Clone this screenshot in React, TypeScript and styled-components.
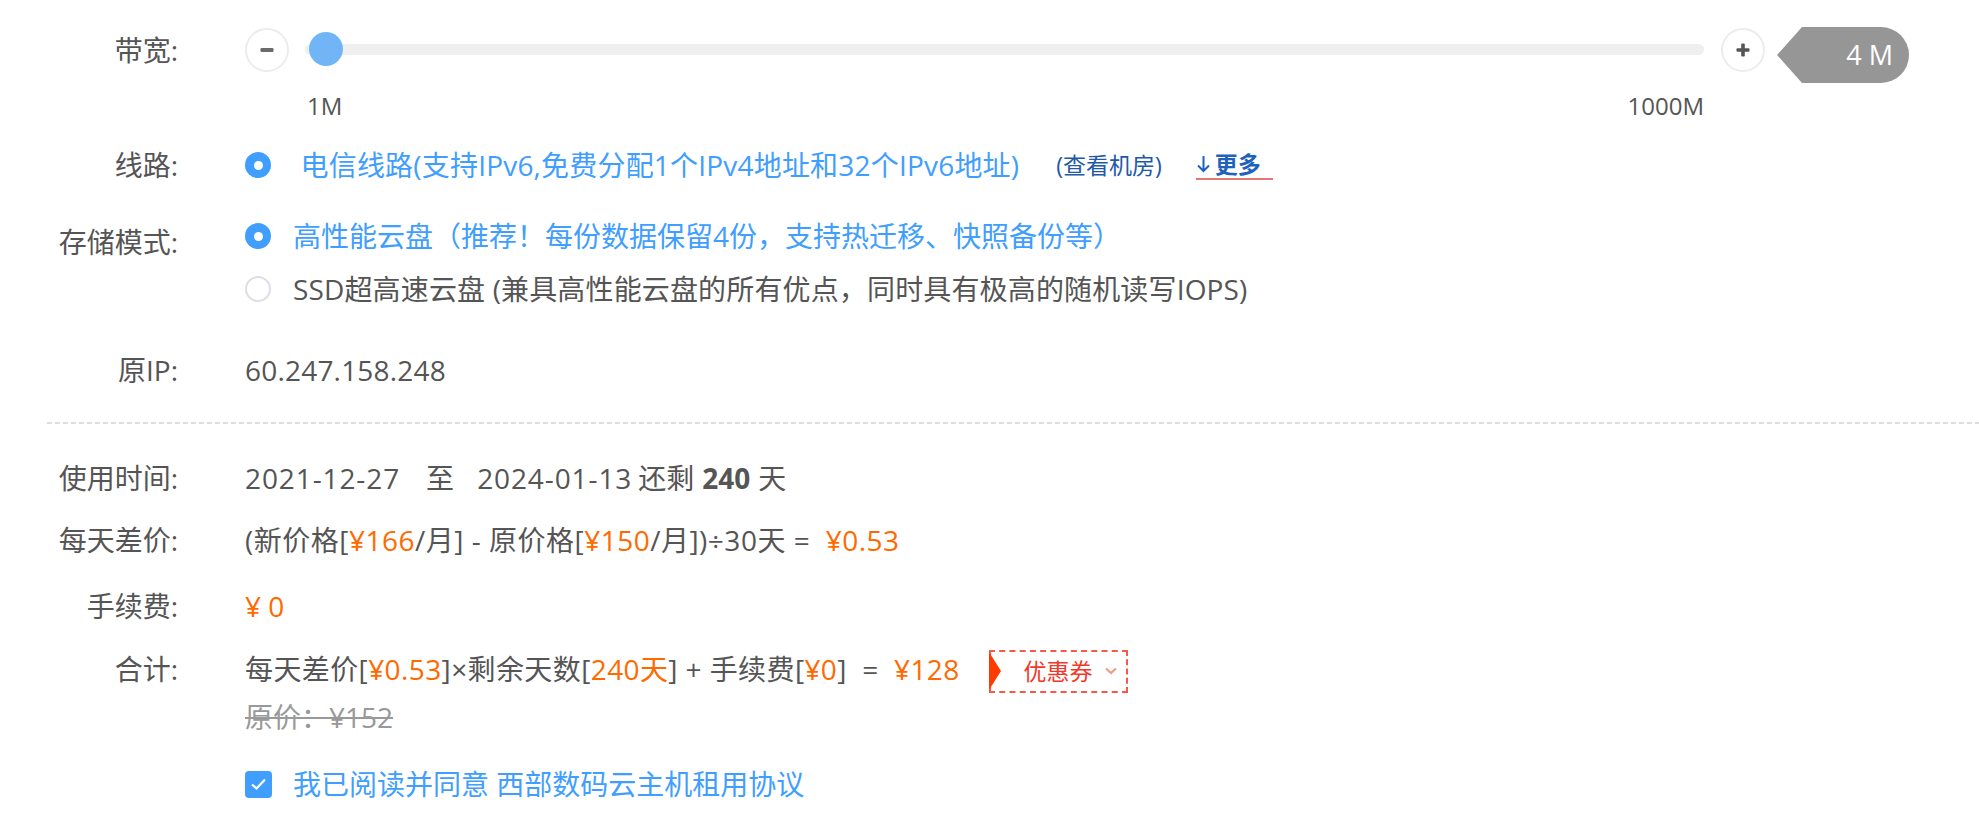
import React from 'react';
import styled, { createGlobalStyle } from 'styled-components';

const GlobalStyle = createGlobalStyle`
  html, body { margin: 0; padding: 0; background: #fff; }
  body {
    font-family: "Open Sans", "Noto Sans CJK SC", sans-serif;
    font-size: 28px;
    color: #555;
  }
  * { box-sizing: border-box; }
`;

const Page = styled.div`
  padding: 28px 70px 40px 47px;
`;

const Row = styled.div<{ $mt?: number; $align?: string }>`
  display: flex;
  align-items: ${p => p.$align ?? 'flex-start'};
  margin-top: ${p => p.$mt ?? 0}px;
`;

const Label = styled.div<{ $pt?: number }>`
  flex: none;
  width: 131px;
  margin-right: 67px;
  padding-top: ${p => p.$pt ?? 0}px;
  text-align: right;
  line-height: 40px;
  color: #555;
  white-space: nowrap;
`;

const Content = styled.div<{ $ls?: number }>`
  flex: 1;
  min-width: 0;
  line-height: 40px;
  white-space: nowrap;
  color: #555;
  letter-spacing: ${p => p.$ls ?? 0}px;
`;

/* ---------- slider ---------- */
const SliderBox = styled.div`
  flex: 1;
  display: flex;
  align-items: center;
  height: 44px;
`;

const StepButton = styled.button`
  flex: none;
  width: 44px;
  height: 44px;
  border-radius: 50%;
  border: 2px solid #ececec;
  background: #fff;
  display: flex;
  align-items: center;
  justify-content: center;
  padding: 0;
  cursor: pointer;
`;

const Track = styled.div`
  flex: 1;
  position: relative;
  height: 11px;
  border-radius: 6px;
  background: #efefef;
  margin: -2px 17px 0 16px;
`;

const Thumb = styled.div`
  position: absolute;
  top: 50%;
  width: 34px;
  height: 34px;
  margin-top: -17px;
  border-radius: 50%;
  background: #72b5f6;
`;

const ValueTag = styled.div`
  flex: none;
  position: relative;
  width: 107px;
  height: 56px;
  margin: 10px 0 0 37px;
  background: #969696;
  color: #fff;
  border-radius: 0 28px 28px 0;
  font-size: 27px;
  line-height: 56px;
  text-align: right;
  padding-right: 16px;
  &::before {
    content: '';
    position: absolute;
    left: -25px;
    top: 0;
    border-right: 25px solid #969696;
    border-top: 28px solid transparent;
    border-bottom: 28px solid transparent;
  }
`;

const ScaleBar = styled.div`
  flex: 1;
  display: flex;
  justify-content: space-between;
  margin: 0 205px 0 60px;
  padding-left: 2px;
  font-size: 24px;
  line-height: 28px;
  color: #555;
`;

/* ---------- radios ---------- */
const Options = styled.div`
  display: flex;
  flex-direction: column;
  gap: 13px;
`;

const Option = styled.div`
  display: flex;
  align-items: center;
  line-height: 40px;
  white-space: nowrap;
`;

const Radio = styled.span<{ $checked?: boolean }>`
  flex: none;
  position: relative;
  width: 26px;
  height: 26px;
  margin-right: 22px;
  border-radius: 50%;
  background: ${p => (p.$checked ? '#409eff' : '#fff')};
  border: ${p => (p.$checked ? 'none' : '2px solid #dcdfe6')};
  &::after {
    content: '';
    display: ${p => (p.$checked ? 'block' : 'none')};
    position: absolute;
    left: 50%;
    top: 50%;
    width: 9px;
    height: 9px;
    margin: -4.5px 0 0 -4.5px;
    border-radius: 50%;
    background: #fff;
  }
`;

const OptionText = styled.span<{ $active?: boolean; $ls?: number }>`
  color: ${p => (p.$active ? '#409eff' : '#555')};
  letter-spacing: ${p => p.$ls ?? 0}px;
`;

const SmallLink = styled.span`
  margin-left: 37px;
  font-size: 23px;
  color: #2159a8;
`;

const MoreLink = styled.span`
  display: inline-flex;
  align-items: center;
  gap: 4px;
  margin-left: 34px;
  padding-right: 12px;
  font-size: 23px;
  font-weight: 700;
  line-height: 28px;
  color: #1f62bd;
  border-bottom: 2px solid #e07878;
`;

/* ---------- misc ---------- */
const Divider = styled.div`
  height: 2px;
  margin: 32px -70px 0 0;
  background: repeating-linear-gradient(to right, #dddddd 0 5px, transparent 5px 8px);
`;

const Space = styled.span<{ $w: number }>`
  display: inline-block;
  width: ${p => p.$w}px;
`;

const DateText = styled.span`
  letter-spacing: 0.9px;
`;

const Strong = styled.b`
  font-weight: 700;
  color: #555;
`;

const Price = styled.span`
  color: #ff6a00;
`;

const TotalLine = styled.div`
  display: flex;
  align-items: center;
  height: 40px;
  white-space: nowrap;
`;

const TotalText = styled.span`
  letter-spacing: 0.4px;
`;

const Coupon = styled.div`
  flex: none;
  position: relative;
  display: flex;
  align-items: center;
  width: 139px;
  height: 43px;
  margin: 4px 0 0 29px;
  padding: 0 8px 0 33px;
  border: 2px dashed #f45a4a;
  font-size: 23px;
  color: #f0392b;
  &::before {
    content: '';
    position: absolute;
    left: -2px;
    top: 0;
    border-left: 12px solid #ff3a00;
    border-top: 19.5px solid transparent;
    border-bottom: 19.5px solid transparent;
  }
`;

const CouponText = styled.span`
  flex: 1;
`;

const OldPrice = styled.div`
  margin-top: 8px;
  line-height: 40px;
  color: #999;
  text-decoration: line-through;
`;

const AgreeLine = styled.div`
  display: flex;
  align-items: center;
  line-height: 40px;
  color: #409eff;
  white-space: nowrap;
`;

const CheckBox = styled.span`
  flex: none;
  width: 27px;
  height: 27px;
  margin-right: 21px;
  border-radius: 4px;
  background: #409eff;
  display: flex;
  align-items: center;
  justify-content: center;
`;

const MinusIcon = () => (
  <svg width="16" height="16" viewBox="0 0 16 16">
    <rect x="1.5" y="6" width="13" height="4" rx="1.2" fill="#6b6b6b" />
  </svg>
);

const PlusIcon = () => (
  <svg width="16" height="16" viewBox="0 0 16 16">
    <rect x="1.5" y="6.2" width="13" height="3.6" rx="1" fill="#555" />
    <rect x="6.2" y="1.5" width="3.6" height="13" rx="1" fill="#555" />
  </svg>
);

const DownArrow = () => (
  <svg width="15" height="20" viewBox="0 0 15 20">
    <path d="M7.5 2 V17 M2 11.5 L7.5 17 L13 11.5" stroke="#1f62bd" strokeWidth="2" fill="none" />
  </svg>
);

const Chevron = () => (
  <svg width="14" height="10" viewBox="0 0 14 10">
    <path d="M2 2.5 L7 7 L12 2.5" stroke="#f59a82" strokeWidth="2.2" fill="none" />
  </svg>
);

const CheckIcon = () => (
  <svg width="17" height="14" viewBox="0 0 17 14">
    <path d="M2 7.5 L6.5 11.5 L15 2.5" stroke="#fff" strokeWidth="2.2" fill="none" />
  </svg>
);

export default function App() {
  const min = 1;
  const max = 1000;
  const value = 4;
  const frac = (value - min) / (max - min);

  return (
    <>
      <GlobalStyle />
      <Page>
        <Row $align="center">
          <Label>带宽:</Label>
          <SliderBox>
            <StepButton aria-label="减少">
              <MinusIcon />
            </StepButton>
            <Track>
              <Thumb style={{ left: `calc((100% - 34px) * ${frac})` }} />
            </Track>
            <StepButton aria-label="增加">
              <PlusIcon />
            </StepButton>
            <ValueTag>4 M</ValueTag>
          </SliderBox>
        </Row>

        <Row $mt={20}>
          <Label />
          <ScaleBar>
            <span>1M</span>
            <span>1000M</span>
          </ScaleBar>
        </Row>

        <Row $mt={25}>
          <Label>线路:</Label>
          <Content>
            <Option>
              <Radio $checked />
              <OptionText $active $ls={0.2}>
                {'\u00a0'}电信线路(支持IPv6,免费分配1个IPv4地址和32个IPv6地址)
              </OptionText>
              <SmallLink>(查看机房)</SmallLink>
              <MoreLink>
                <DownArrow />
                更多
              </MoreLink>
            </Option>
          </Content>
        </Row>

        <Row $mt={31}>
          <Label $pt={6}>存储模式:</Label>
          <Content>
            <Options>
              <Option>
                <Radio $checked />
                <OptionText $active>
                  高性能云盘（推荐！每份数据保留4份，支持热迁移、快照备份等）
                </OptionText>
              </Option>
              <Option>
                <Radio />
                <OptionText $ls={0.15}>
                  SSD超高速云盘 (兼具高性能云盘的所有优点，同时具有极高的随机读写IOPS)
                </OptionText>
              </Option>
            </Options>
          </Content>
        </Row>

        <Row $mt={41}>
          <Label>原IP:</Label>
          <Content $ls={0.2}>60.247.158.248</Content>
        </Row>

        <Divider />

        <Row $mt={34}>
          <Label>使用时间:</Label>
          <Content>
            <DateText>2021-12-27</DateText>
            <Space $w={26} />至<Space $w={23} />
            <DateText>2024-01-13</DateText>
            <Space $w={6} />还剩<Space $w={8} />
            <Strong>240</Strong>
            <Space $w={8} />天
          </Content>
        </Row>

        <Row $mt={22}>
          <Label>每天差价:</Label>
          <Content $ls={0.5}>
            (新价格[<Price>¥166</Price>/月] - 原价格[<Price>¥150</Price>/月])÷30天 ={'\u00a0\u00a0'}
            <Price>¥0.53</Price>
          </Content>
        </Row>

        <Row $mt={26}>
          <Label>手续费:</Label>
          <Content>
            <Price>¥ 0</Price>
          </Content>
        </Row>

        <Row $mt={23}>
          <Label>合计:</Label>
          <Content>
            <TotalLine>
              <TotalText>
                每天差价[<Price>¥0.53</Price>]×剩余天数[<Price>240天</Price>] + 手续费[<Price>¥0</Price>]
                {'\u00a0\u00a0'}={'\u00a0\u00a0'}
                <Price>¥128</Price>
              </TotalText>
              <Coupon>
                <CouponText>优惠券</CouponText>
                <Chevron />
              </Coupon>
            </TotalLine>
            <OldPrice>原价：¥152</OldPrice>
          </Content>
        </Row>

        <Row $mt={27}>
          <Label />
          <Content>
            <AgreeLine>
              <CheckBox>
                <CheckIcon />
              </CheckBox>
              我已阅读并同意 西部数码云主机租用协议
            </AgreeLine>
          </Content>
        </Row>
      </Page>
    </>
  );
}
